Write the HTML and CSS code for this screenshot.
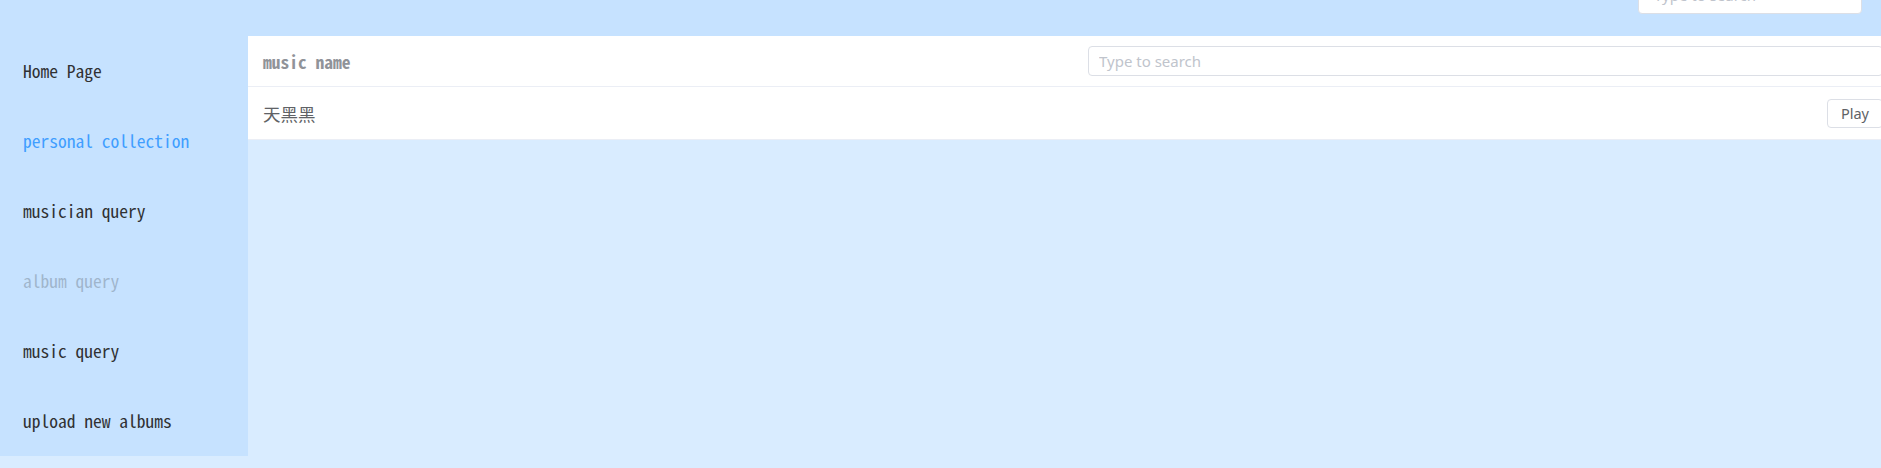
FILE: index.html
```html
<!DOCTYPE html>
<html lang="en">
<head>
<meta charset="utf-8">
<title>Music</title>
<link rel="stylesheet" href="styles.css">
</head>
<body>
<header class="topbar">
  <input class="top-search" type="text" placeholder="Type to search">
</header>
<div class="layout">
  <aside class="sidebar">
    <ul class="menu">
      <li class="menu-item">Home Page</li>
      <li class="menu-item is-active">personal collection</li>
      <li class="menu-item">musician query</li>
      <li class="menu-item is-disabled">album query</li>
      <li class="menu-item">music query</li>
      <li class="menu-item">upload new albums</li>
    </ul>
  </aside>
  <main class="main">
    <div class="table">
      <div class="row head-row">
        <div class="cell name-cell head-label">music name</div>
        <div class="cell op-cell">
          <input class="table-search" type="text" placeholder="Type to search">
        </div>
      </div>
      <div class="row body-row">
        <div class="cell name-cell song">天黑黑</div>
        <div class="cell op-cell op-right">
          <button class="btn" type="button">Play</button>
        </div>
      </div>
    </div>
  </main>
</div>
</body>
</html>
```

FILE: styles.css
```css
html, body {
  margin: 0;
  padding: 0;
}
body {
  background: #d9ecff;
  overflow: hidden;
  font-family: "Noto Sans", "Open Sans", sans-serif;
}
.topbar {
  height: 36px;
  background: #c6e2ff;
  display: flex;
  justify-content: flex-end;
  align-items: flex-start;
  padding-right: 19px;
}
.top-search {
  box-sizing: border-box;
  width: 224px;
  height: 38px;
  margin-top: -24px;
  border: 1px solid #dcdfe6;
  border-radius: 4px;
  background: #fff;
  padding: 0 15px;
  font-family: "Noto Sans", sans-serif;
  font-size: 15px;
  color: #606266;
  outline: none;
}
.top-search::placeholder,
.table-search::placeholder {
  color: #c0c4cc;
}
.layout {
  display: flex;
  align-items: flex-start;
}
.sidebar {
  width: 248px;
  flex: none;
  background: #c6e2ff;
}
.menu {
  list-style: none;
  margin: 0;
  padding: 0;
}
.menu-item {
  height: 70px;
  line-height: 70px;
  padding-left: 23px;
  font-family: "Noto Sans Mono CJK SC", "Liberation Mono", monospace;
  font-size: 17.5px;
  color: #303133;
  white-space: nowrap;
}
.menu-item.is-active {
  color: #409eff;
}
.menu-item.is-disabled {
  opacity: 0.25;
}
.main {
  flex: 1;
  min-width: 0;
  overflow: hidden;
}
.table {
  width: 1645px;
  background: #fff;
}
.row {
  display: flex;
  align-items: center;
  border-bottom: 1px solid #ebeef5;
  box-sizing: border-box;
}
.head-row {
  height: 51px;
}
.body-row {
  height: 53px;
}
.cell {
  box-sizing: border-box;
}
.name-cell {
  flex: 1;
  padding-left: 15px;
  font-family: "Noto Sans Mono CJK SC", "Noto Sans CJK SC", "Liberation Mono", monospace;
  font-size: 17.5px;
}
.head-label {
  color: #909399;
  font-weight: bold;
}
.song {
  color: #606266;
  font-weight: 300;
}
.op-cell {
  width: 815px;
  flex: none;
  padding: 0 10px;
  display: flex;
}
.op-right {
  justify-content: flex-end;
}
.table-search {
  box-sizing: border-box;
  width: 100%;
  height: 30px;
  border: 1px solid #dcdfe6;
  border-radius: 4px;
  padding: 0 10px;
  font-family: "Noto Sans", sans-serif;
  font-size: 15px;
  color: #606266;
  outline: none;
  background: #fff;
}
.btn {
  box-sizing: border-box;
  width: 56px;
  height: 29px;
  border: 1px solid #dcdfe6;
  border-radius: 4px;
  background: #fff;
  color: #606266;
  font-family: "Noto Sans", sans-serif;
  font-size: 14.5px;
  padding: 0;
  text-align: center;
}
```
